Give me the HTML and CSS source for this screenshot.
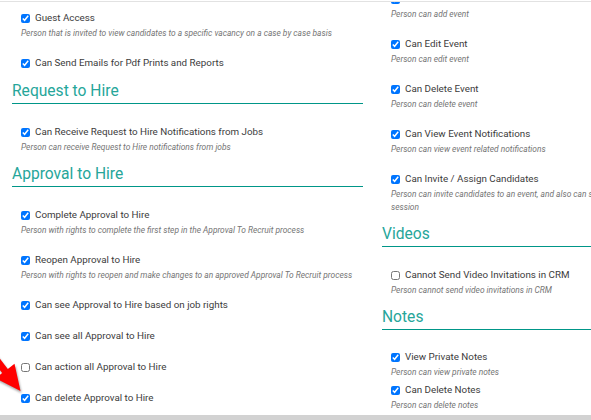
FILE: index.html
```html
<!DOCTYPE html>
<html>
<head>
  <title>Permissions</title>
  <link rel="stylesheet" href="styles.css">
</head>
<body>

  <div class="viewport">
    <div class="columns">

      <div class="col">
        <ul class="perm-list first">
          <li class="perm">
            <label><input type="checkbox" checked> Guest Access</label>
            <div class="perm-desc">Person that is invited to view candidates to a specific vacancy on a case by case basis</div>
          </li>
          <li class="perm">
            <label><input type="checkbox" checked> Can Send Emails for Pdf Prints and Reports</label>
          </li>
        </ul>

        <h3 class="section-title">Request to Hire</h3>
        <ul class="perm-list">
          <li class="perm">
            <label><input type="checkbox" checked> Can Receive Request to Hire Notifications from Jobs</label>
            <div class="perm-desc">Person can receive Request to Hire notifications from jobs</div>
          </li>
        </ul>

        <h3 class="section-title">Approval to Hire</h3>
        <ul class="perm-list">
          <li class="perm">
            <label><input type="checkbox" checked> Complete Approval to Hire</label>
            <div class="perm-desc">Person with rights to complete the first step in the Approval To Recruit process</div>
          </li>
          <li class="perm">
            <label><input type="checkbox" checked> Reopen Approval to Hire</label>
            <div class="perm-desc">Person with rights to reopen and make changes to an approved Approval To Recruit process</div>
          </li>
          <li class="perm">
            <label><input type="checkbox" checked> Can see Approval to Hire based on job rights</label>
          </li>
          <li class="perm">
            <label><input type="checkbox" checked> Can see all Approval to Hire</label>
          </li>
          <li class="perm">
            <label><input type="checkbox"> Can action all Approval to Hire</label>
          </li>
          <li class="perm">
            <label><input type="checkbox" checked> Can delete Approval to Hire</label>
          </li>
        </ul>
      </div>

      <div class="col col-right">
        <ul class="perm-list first">
          <li class="perm">
            <label><input type="checkbox" checked> Can Add Event</label>
            <div class="perm-desc">Person can add event</div>
          </li>
          <li class="perm">
            <label><input type="checkbox" checked> Can Edit Event</label>
            <div class="perm-desc">Person can edit event</div>
          </li>
          <li class="perm">
            <label><input type="checkbox" checked> Can Delete Event</label>
            <div class="perm-desc">Person can delete event</div>
          </li>
          <li class="perm">
            <label><input type="checkbox" checked> Can View Event Notifications</label>
            <div class="perm-desc">Person can view event related notifications</div>
          </li>
          <li class="perm">
            <label><input type="checkbox" checked> Can Invite / Assign Candidates</label>
            <div class="perm-desc">Person can invite candidates to an event, and also can schedule and assign candidates to a session</div>
          </li>
        </ul>

        <h3 class="section-title">Videos</h3>
        <ul class="perm-list">
          <li class="perm">
            <label><input type="checkbox"> Cannot Send Video Invitations in CRM</label>
            <div class="perm-desc">Person cannot send video invitations in CRM</div>
          </li>
        </ul>

        <h3 class="section-title">Notes</h3>
        <ul class="perm-list tight">
          <li class="perm">
            <label><input type="checkbox" checked> View Private Notes</label>
            <div class="perm-desc">Person can view private notes</div>
          </li>
          <li class="perm">
            <label><input type="checkbox" checked> Can Delete Notes</label>
            <div class="perm-desc">Person can delete notes</div>
          </li>
        </ul>
      </div>

    </div>
  </div>

  <div class="bottom-bar"></div>

  <!-- annotation arrow -->
  <svg class="arrow" width="40" height="70" viewBox="0 0 40 70">
    <polygon fill="#f00" points="20.5,39 -4.5,26.3 2.2,21.1 -16.1,-2.6 -10.5,-6.8 7.8,16.9 14.5,11.7"/>
  </svg>

</body>
</html>
```

FILE: styles.css
```css
body {
  font-family: Roboto, "Liberation Sans", sans-serif;
  margin: 0;
  height: 420px;
  overflow: hidden;
  background-color: #fff;
  color: #333;
  position: relative;
}

.viewport {
  margin-top: 1px;
  border-top: 1px solid #e2e2e2;
  height: 413px;
  overflow: hidden;
}

.columns {
  display: flex;
  gap: 19px;
  padding-left: 12px;
}

.col {
  width: 351px;
  flex-shrink: 0;
}

.col-right {
  margin-top: -11px;
}

.section-title {
  margin: 10px 0 0;
  padding-bottom: 2px;
  border-bottom: 1px solid #009688;
  color: #26a69a;
  font-size: 15.6px;
  font-weight: 400;
  line-height: 20px;
}

.perm-list {
  list-style: none;
  margin: 0;
  padding: 20px 0 0 9px;
  display: flex;
  flex-direction: column;
  gap: 15px;
}

.perm-list.first {
  padding-top: 8px;
}

.col-right .perm-list.first {
  padding-top: 0;
}

.perm-list.tight {
  padding-top: 19px;
  gap: 3px;
}

.perm label {
  display: flex;
  align-items: center;
  font-size: 9.8px;
  line-height: 16px;
  color: #3c3c3c;
  white-space: nowrap;
}

.perm input {
  width: 9px;
  height: 9px;
  margin: 0 5px 0 0;
  flex-shrink: 0;
}

.perm-desc {
  margin-top: 1px;
  font-size: 8.4px;
  font-style: italic;
  line-height: 13px;
  color: #757575;
}

.bottom-bar {
  height: 5px;
  background-color: #d2d2d2;
}

.arrow {
  position: absolute;
  left: 0;
  top: 352px;
  overflow: visible;
  filter: drop-shadow(1px 2px 1px rgba(0, 0, 0, 0.35));
}
```
